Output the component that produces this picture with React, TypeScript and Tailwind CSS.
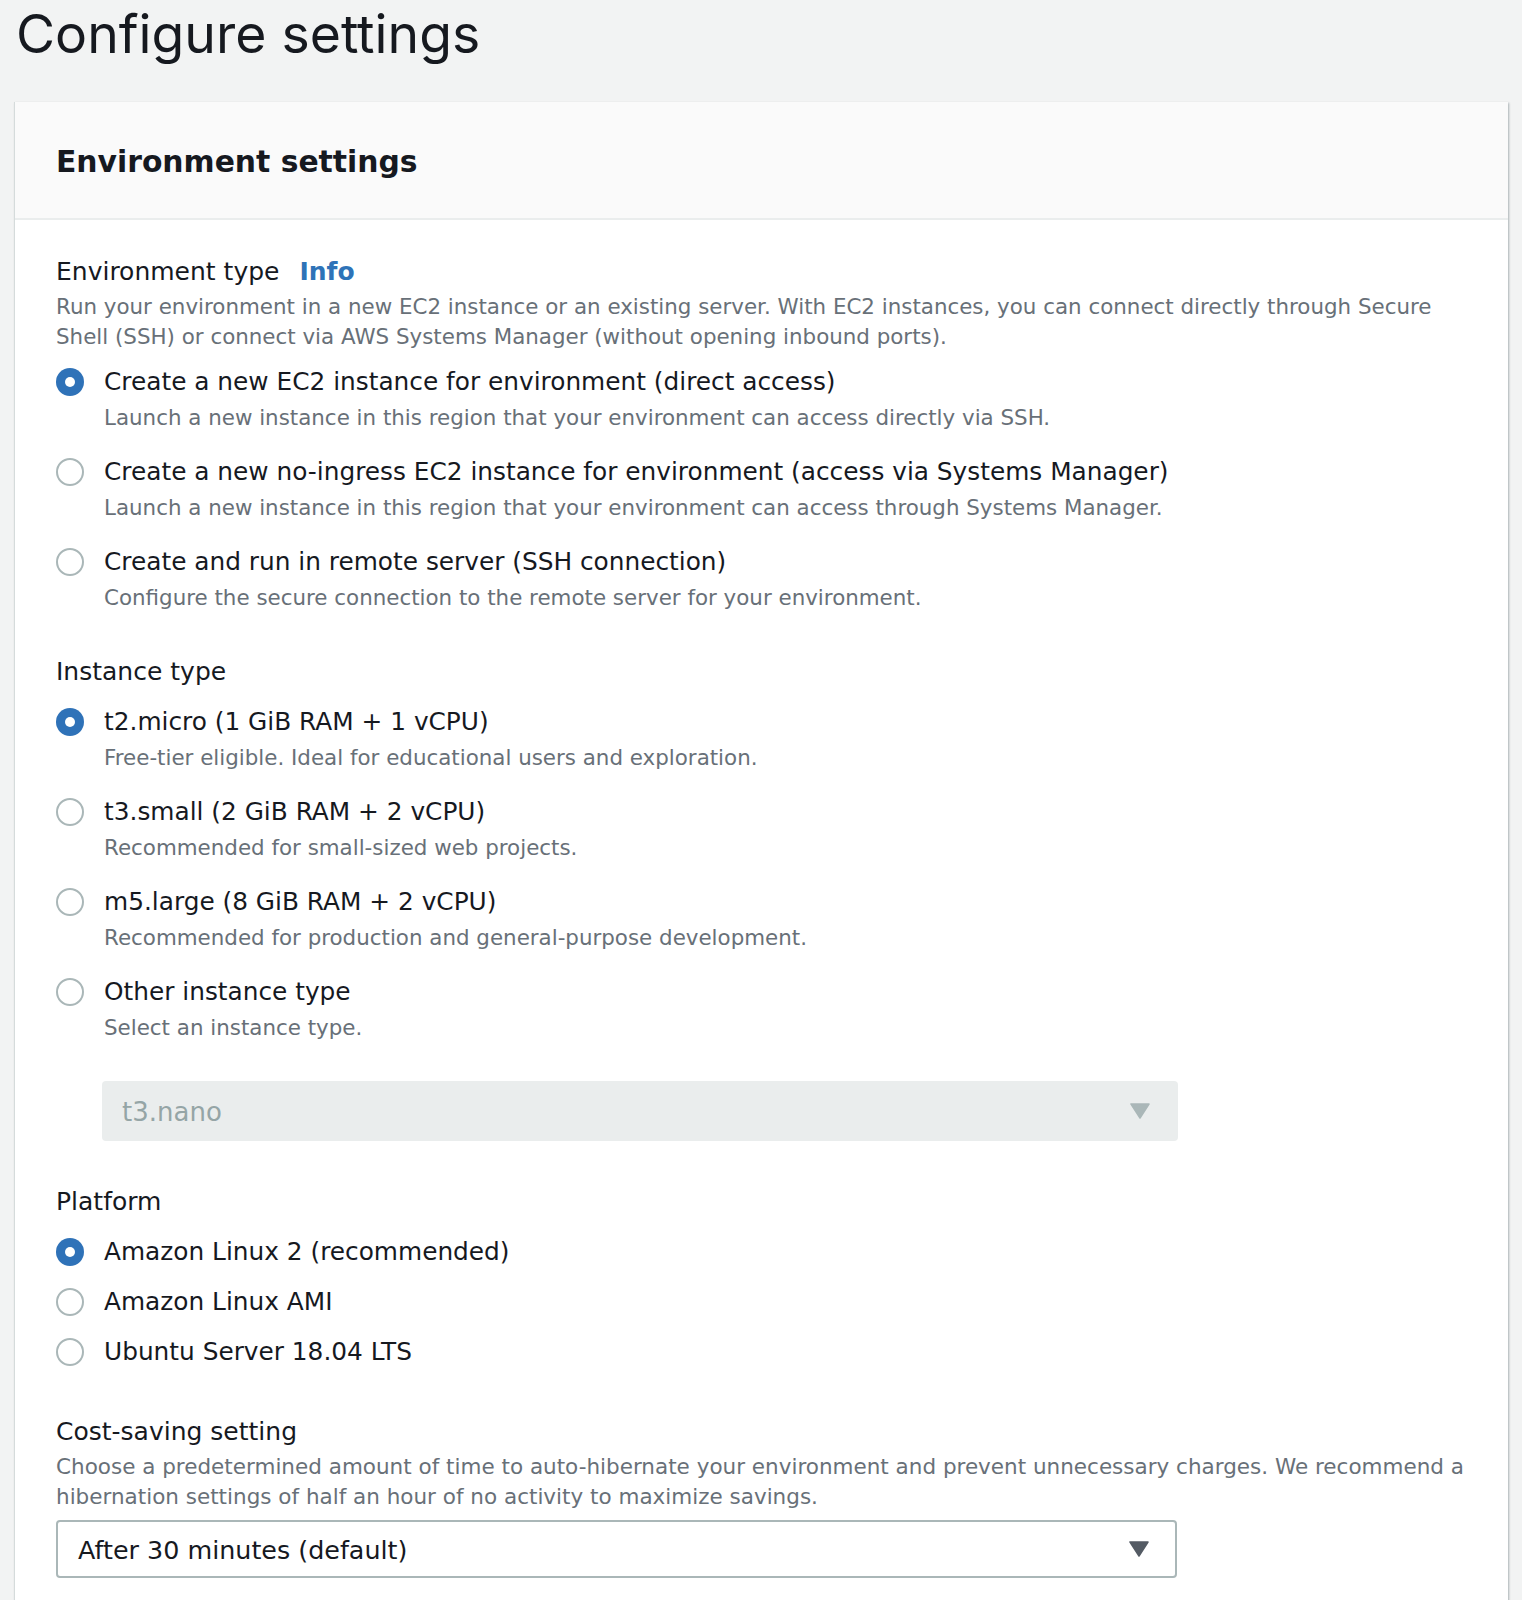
import type { ReactNode } from "react"

type Option = {
  label: string
  description?: string
  checked?: boolean
}

const environmentOptions: Option[] = [
  {
    label: "Create a new EC2 instance for environment (direct access)",
    description: "Launch a new instance in this region that your environment can access directly via SSH.",
    checked: true,
  },
  {
    label: "Create a new no-ingress EC2 instance for environment (access via Systems Manager)",
    description: "Launch a new instance in this region that your environment can access through Systems Manager.",
  },
  {
    label: "Create and run in remote server (SSH connection)",
    description: "Configure the secure connection to the remote server for your environment.",
  },
]

const instanceOptions: Option[] = [
  {
    label: "t2.micro (1 GiB RAM + 1 vCPU)",
    description: "Free-tier eligible. Ideal for educational users and exploration.",
    checked: true,
  },
  { label: "t3.small (2 GiB RAM + 2 vCPU)", description: "Recommended for small-sized web projects." },
  {
    label: "m5.large (8 GiB RAM + 2 vCPU)",
    description: "Recommended for production and general-purpose development.",
  },
  { label: "Other instance type", description: "Select an instance type." },
]

const platformOptions: Option[] = [
  { label: "Amazon Linux 2 (recommended)", checked: true },
  { label: "Amazon Linux AMI" },
  { label: "Ubuntu Server 18.04 LTS" },
]

function Radio({ checked }: { checked?: boolean }) {
  if (checked) {
    return (
      <span className="w-[28px] h-[28px] shrink-0 rounded-full bg-[#2f72b8] flex items-center justify-center">
        <span className="w-[10px] h-[10px] rounded-full bg-white" />
      </span>
    )
  }
  return <span className="w-[28px] h-[28px] shrink-0 rounded-full border-2 border-[#aab7b8] bg-white" />
}

function RadioGroup({ options, gap }: { options: Option[]; gap: string }) {
  return (
    <div className={`flex flex-col ${gap}`}>
      {options.map((opt) => (
        <div key={opt.label} className="flex pt-[2px]">
          <div className="h-[36px] w-[48px] flex items-center">
            <Radio checked={opt.checked} />
          </div>
          <div>
            <div className="text-[24.8px] leading-[36px] text-[#16191f]">{opt.label}</div>
            {opt.description && (
              <div className="text-[21.4px] leading-[36px] text-[#687078]">{opt.description}</div>
            )}
          </div>
        </div>
      ))}
    </div>
  )
}

function Label({ children }: { children: ReactNode }) {
  return <div className="text-[25px] leading-[30px] text-[#16191f]">{children}</div>
}

function Caret({ color }: { color: string }) {
  return (
    <svg width="20" height="16" viewBox="0 0 20 16" className="shrink-0">
      <path d="M1 1h18L10 15z" fill={color} stroke={color} strokeWidth="1.5" strokeLinejoin="round" />
    </svg>
  )
}

export default function App() {
  return (
    <div className="min-h-screen bg-[#f2f3f3] font-['DejaVu_Sans',sans-serif] pb-10">
      <h1 className="pl-[16px] pt-[1px] font-['Inter',sans-serif] text-[53.5px] leading-[66px] text-[#16191f] mb-[35px]">
        Configure settings
      </h1>

      <div className="mx-[14px] bg-white border-l border-[#d5dbdb] shadow-[1px_1px_2px_rgba(0,28,36,0.3)]">
        {/* Card header */}
        <div className="h-[118px] bg-[#fafafa] border-b-2 border-[#eaeded] px-[41px] flex items-center">
          <h2 className="pt-[3px] text-[29.8px] font-bold text-[#16191f] leading-[36px]">Environment settings</h2>
        </div>

        {/* Card body */}
        <div className="px-[41px] pt-[37px] pb-[40px]">
          {/* Environment type */}
          <div className="flex items-center gap-[20px]">
            <Label>Environment type</Label>
            <span className="text-[25px] leading-[30px] font-bold text-[#2e73b8]">Info</span>
          </div>
          <p className="mt-[5px] text-[21.4px] leading-[30px] text-[#687078] whitespace-nowrap">
            Run your environment in a new EC2 instance or an existing server. With EC2 instances, you can connect directly through Secure
            <br />
            Shell (SSH) or connect via AWS Systems Manager (without opening inbound ports).
          </p>
          <div className="mt-[10px]">
            <RadioGroup options={environmentOptions} gap="gap-[16px]" />
          </div>

          {/* Instance type */}
          <div className="mt-[41px]">
            <Label>Instance type</Label>
          </div>
          <div className="mt-[15px]">
            <RadioGroup options={instanceOptions} gap="gap-[16px]" />
          </div>
          <div className="mt-[35px] ml-[46px] w-[1076px] h-[60px] rounded-[4px] bg-[#eaeded] flex items-center justify-between pl-[20px] pr-[28px]">
            <span className="pt-[2px] text-[26px] text-[#95a5a6]">t3.nano</span>
            <Caret color="#aab7b8" />
          </div>

          {/* Platform */}
          <div className="mt-[46px]">
            <Label>Platform</Label>
          </div>
          <div className="mt-[15px]">
            <RadioGroup options={platformOptions} gap="gap-[12px]" />
          </div>

          {/* Cost-saving setting */}
          <div className="mt-[47px]">
            <Label>Cost-saving setting</Label>
          </div>
          <p className="mt-[5px] text-[21.5px] leading-[30px] text-[#687078] whitespace-nowrap">
            Choose a predetermined amount of time to auto-hibernate your environment and prevent unnecessary charges. We recommend a
            <br />
            hibernation settings of half an hour of no activity to maximize savings.
          </p>
          <div className="mt-[8px] w-[1121px] h-[58px] rounded-[4px] border-2 border-[#aab7b8] bg-white flex items-center justify-between pl-[20px] pr-[26px]">
            <span className="pt-[2px] text-[25.4px] text-[#16191f]">After 30 minutes (default)</span>
            <Caret color="#545b64" />
          </div>
        </div>
      </div>
    </div>
  )
}
